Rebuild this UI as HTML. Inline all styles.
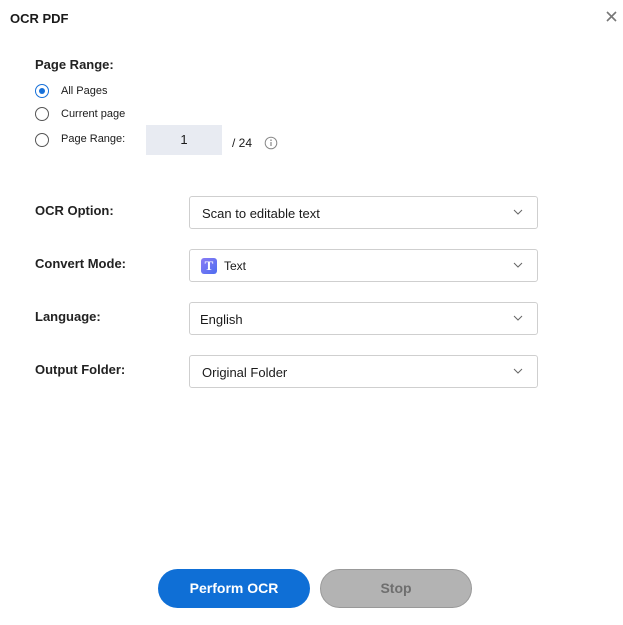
<!DOCTYPE html>
<html><head><style>
body{margin:0;width:623px;height:625px;background:#fff;font-family:"Liberation Sans",sans-serif;color:#1a1a1a;position:relative;overflow:hidden}
.a{position:absolute}
.t{font-size:13px}
.radio{position:absolute;left:35px;width:14px;height:14px;border:1px solid #555;border-radius:50%;box-sizing:border-box}
.dd{position:absolute;left:189px;width:349px;height:33px;border:1px solid #cfcfcf;border-radius:3px;box-sizing:border-box;font-size:13px}
.dd span{position:absolute;top:9px}
.dd svg{position:absolute;right:14px;top:12px}
.lbl{position:absolute;left:35px;font-size:13px;font-weight:bold;color:#222}
</style></head><body>
<div class="a" style="left:10px;top:11px;font-size:13px;font-weight:bold">OCR PDF</div>
<svg class="a" style="left:606px;top:11px" width="11" height="11"><path d="M1 1L10 10M10 1L1 10" stroke="#777" stroke-width="1.6"/></svg>
<div class="lbl" style="top:57px">Page Range:</div>
<div class="radio" style="top:84px;border-color:#1670d9"></div>
<div class="a" style="left:39px;top:88px;width:6px;height:6px;border-radius:50%;background:#1670d9"></div>
<div class="a" style="left:61px;top:85px;font-size:11px">All Pages</div>
<div class="radio" style="top:107px"></div>
<div class="a" style="left:61px;top:108px;font-size:11px">Current page</div>
<div class="radio" style="top:133px"></div>
<div class="a" style="left:61px;top:133px;font-size:11px">Page Range:</div>
<div class="a" style="left:146px;top:125px;width:76px;height:30px;background:#e8ebf2;text-align:center;line-height:30px;font-size:13px">1</div>
<div class="a" style="left:232px;top:136px;font-size:12px">/ 24</div>
<svg class="a" style="left:264px;top:136px" width="14" height="14"><circle cx="7" cy="7" r="5.8" fill="none" stroke="#888"/><path d="M7 6v4" stroke="#888" stroke-width="1.2"/><circle cx="7" cy="4.2" r="0.8" fill="#888"/></svg>
<div class="lbl" style="top:203px">OCR Option:</div>
<div class="lbl" style="top:256px">Convert Mode:</div>
<div class="lbl" style="top:309px">Language:</div>
<div class="lbl" style="top:362px">Output Folder:</div>
<div class="dd" style="top:196px"><span style="left:12px">Scan to editable text</span><svg width="10" height="6"><path d="M1 1L5 5L9 1" stroke="#666" fill="none"/></svg></div>
<div class="dd" style="top:249px"><div class="a" style="left:11px;top:8px;width:16px;height:16px;border-radius:3px;background:linear-gradient(135deg,#8a7cf5,#4e6df0);color:#fff;font-family:'Liberation Serif',serif;font-weight:bold;font-size:13px;text-align:center;line-height:16px">T</div><span style="left:34px;font-size:12px">Text</span><svg width="10" height="6"><path d="M1 1L5 5L9 1" stroke="#666" fill="none"/></svg></div>
<div class="dd" style="top:302px"><span style="left:10px">English</span><svg width="10" height="6"><path d="M1 1L5 5L9 1" stroke="#666" fill="none"/></svg></div>
<div class="dd" style="top:355px"><span style="left:12px">Original Folder</span><svg width="10" height="6"><path d="M1 1L5 5L9 1" stroke="#666" fill="none"/></svg></div>
<div class="a" style="left:158px;top:569px;width:152px;height:39px;border-radius:20px;background:#0f6fd6;color:#fff;font-weight:bold;font-size:14px;text-align:center;line-height:39px">Perform OCR</div>
<div class="a" style="left:320px;top:569px;width:152px;height:39px;box-sizing:border-box;border:1px solid #999;border-radius:20px;background:#b3b3b3;color:#6e6e6e;font-weight:bold;font-size:14px;text-align:center;line-height:37px">Stop</div>
</body></html>
